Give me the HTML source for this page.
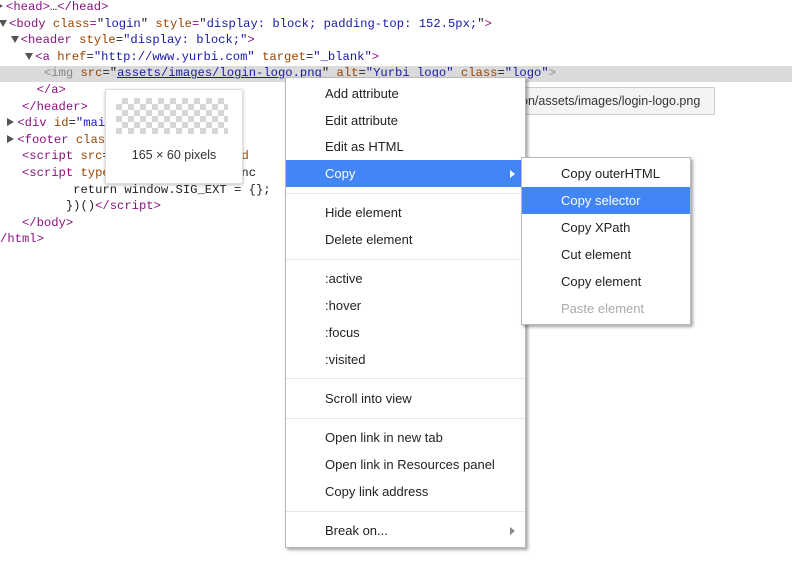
<!DOCTYPE html>
<html><head><style>
body{margin:0;width:792px;height:578px;background:#fff;position:relative;overflow:hidden;font-family:"Liberation Sans",sans-serif}
.code{position:absolute;left:0;top:-1px;font-family:"Liberation Mono",monospace;font-size:12.2px;line-height:16.6px;white-space:pre;color:#222}
.t{color:#881280}.a{color:#994500}.v{color:#1a1aa6}.g{color:#888}.u{color:#1a1aa6;text-decoration:underline}
.row{height:16.6px;position:relative}
.hl{position:absolute;left:0;top:66px;width:792px;height:16px;background:#dadada}
.tri{display:inline-block;width:0;height:0;border-left:4px solid transparent;border-right:4px solid transparent;border-top:7px solid #555;margin-right:2px}
.trr{display:inline-block;width:0;height:0;border-top:4px solid transparent;border-bottom:4px solid transparent;border-left:7px solid #555;margin-right:3px}
.menu{position:absolute;background:#fff;border:1px solid #bababa;box-shadow:2px 2px 3px rgba(0,0,0,.35);font-size:13px;color:#222}
.it{position:absolute;left:0;right:0;height:27px;line-height:27px}
.sel{background:#4285f4;color:#fff}
.sep{position:absolute;left:0;right:0;height:1px;background:#e6e6e6}
.arr{position:absolute;right:10px;top:10px;border-top:4px solid transparent;border-bottom:4px solid transparent;border-left:5px solid #888}
</style></head><body>
<div class="hl"></div>
<div class="code"><div class="row"><span class="trr" style="margin-left:-4px"></span><span class="t">&lt;head&gt;</span>…<span class="t">&lt;/head&gt;</span></div><div class="row"><span class="tri" style="margin-left:-1px"></span><span class="t">&lt;body</span> <span class="a">class</span><span class="t">=</span>"<span class="v">login</span>" <span class="a">style</span><span class="t">=</span>"<span class="v">display: block; padding-top: 152.5px;</span>"<span class="t">&gt;</span></div><div class="row">  <span class="tri" style="margin-left:-4px"></span><span class="t">&lt;header</span> <span class="a">style</span>=<span class="v">"display: block;"</span><span class="t">&gt;</span></div><div class="row">    <span class="tri" style="margin-left:-4px"></span><span class="t">&lt;a</span> <span class="a">href</span>=<span class="v">"http://www.yurbi.com"</span> <span class="a">target</span>=<span class="v">"_blank"</span><span class="t">&gt;</span></div><div class="row">      <span class="g">&lt;img</span> <span class="a">src</span>="<span class="u">assets/images/login-logo.png</span>" <span class="a">alt</span>=<span class="v">"Yurbi logo"</span> <span class="a">class</span>=<span class="v">"logo"</span><span class="g">&gt;</span></div><div class="row">     <span class="t">&lt;/a&gt;</span></div><div class="row">   <span class="t">&lt;/header&gt;</span></div><div class="row"> <span class="trr"></span><span class="t">&lt;div</span> <span class="a">id</span>=<span class="v">"main"</span>          <span class="a">style</span>=<span class="v">"</span></div><div class="row"> <span class="trr"></span><span class="t">&lt;footer</span> <span class="a">class</span>          <span class="a">e</span>=<span class="v">"dis</span></div><div class="row">   <span class="t">&lt;script</span> <span class="a">src</span>=             <span class="u">.js</span>" <span class="a">d</span>                   <span class="a">script</span></div><div class="row">   <span class="t">&lt;script</span> <span class="a">type</span>              <span class="t">&gt;</span>(func</div><div class="row">          return window.SIG_EXT = {};</div><div class="row">         })()<span class="t">&lt;/script&gt;</span></div><div class="row">   <span class="t">&lt;/body&gt;</span></div><div class="row"><span class="t">/html&gt;</span></div></div>

<div style="position:absolute;left:105px;top:89px;width:136px;height:93px;background:#fff;border:1px solid #ddd;box-shadow:0 1px 3px rgba(0,0,0,.25);border-radius:2px">
<div style="position:absolute;left:10px;top:8px;width:112px;height:36px;background:repeating-conic-gradient(#ccc 0 25%,#fff 0 50%) 0 0/12px 12px;opacity:.8"></div>
<div style="position:absolute;left:0;right:0;top:58px;text-align:center;font-size:12.5px;color:#333">165 × 60 pixels</div></div>

<div style="position:absolute;left:510px;top:87px;width:193px;height:26px;background:#f4f4f4;border:1px solid #ccc;font-size:12.5px;line-height:26px;color:#333;padding-left:10px;overflow:hidden;white-space:nowrap">on/assets/images/login-logo.png</div>

<div class="menu" style="left:285px;top:77px;width:239px;height:469px">
<div class="it" style="top:2px;padding-left:39px">Add attribute</div>
<div class="it" style="top:29px;padding-left:39px">Edit attribute</div>
<div class="it" style="top:55px;padding-left:39px">Edit as HTML</div>
<div class="it sel" style="top:82px;padding-left:39px">Copy<span class="arr" style="border-left-color:#fff"></span></div>
<div class="sep" style="top:115px"></div>
<div class="it" style="top:121px;padding-left:39px">Hide element</div>
<div class="it" style="top:148px;padding-left:39px">Delete element</div>
<div class="sep" style="top:181px"></div>
<div class="it" style="top:187px;padding-left:39px">:active</div>
<div class="it" style="top:214px;padding-left:39px">:hover</div>
<div class="it" style="top:241px;padding-left:39px">:focus</div>
<div class="it" style="top:268px;padding-left:39px">:visited</div>
<div class="sep" style="top:300px"></div>
<div class="it" style="top:307px;padding-left:39px">Scroll into view</div>
<div class="sep" style="top:340px"></div>
<div class="it" style="top:346px;padding-left:39px">Open link in new tab</div>
<div class="it" style="top:373px;padding-left:39px">Open link in Resources panel</div>
<div class="it" style="top:400px;padding-left:39px">Copy link address</div>
<div class="sep" style="top:433px"></div>
<div class="it" style="top:439px;padding-left:39px">Break on...<span class="arr"></span></div>
</div>

<div class="menu" style="left:521px;top:157px;width:168px;height:166px">
<div class="it" style="top:2px;padding-left:39px">Copy outerHTML</div>
<div class="it sel" style="top:29px;padding-left:39px">Copy selector</div>
<div class="it" style="top:56px;padding-left:39px">Copy XPath</div>
<div class="it" style="top:83px;padding-left:39px">Cut element</div>
<div class="it" style="top:110px;padding-left:39px">Copy element</div>
<div class="it" style="top:137px;padding-left:39px;color:#aaa">Paste element</div>
</div>
</body></html>
